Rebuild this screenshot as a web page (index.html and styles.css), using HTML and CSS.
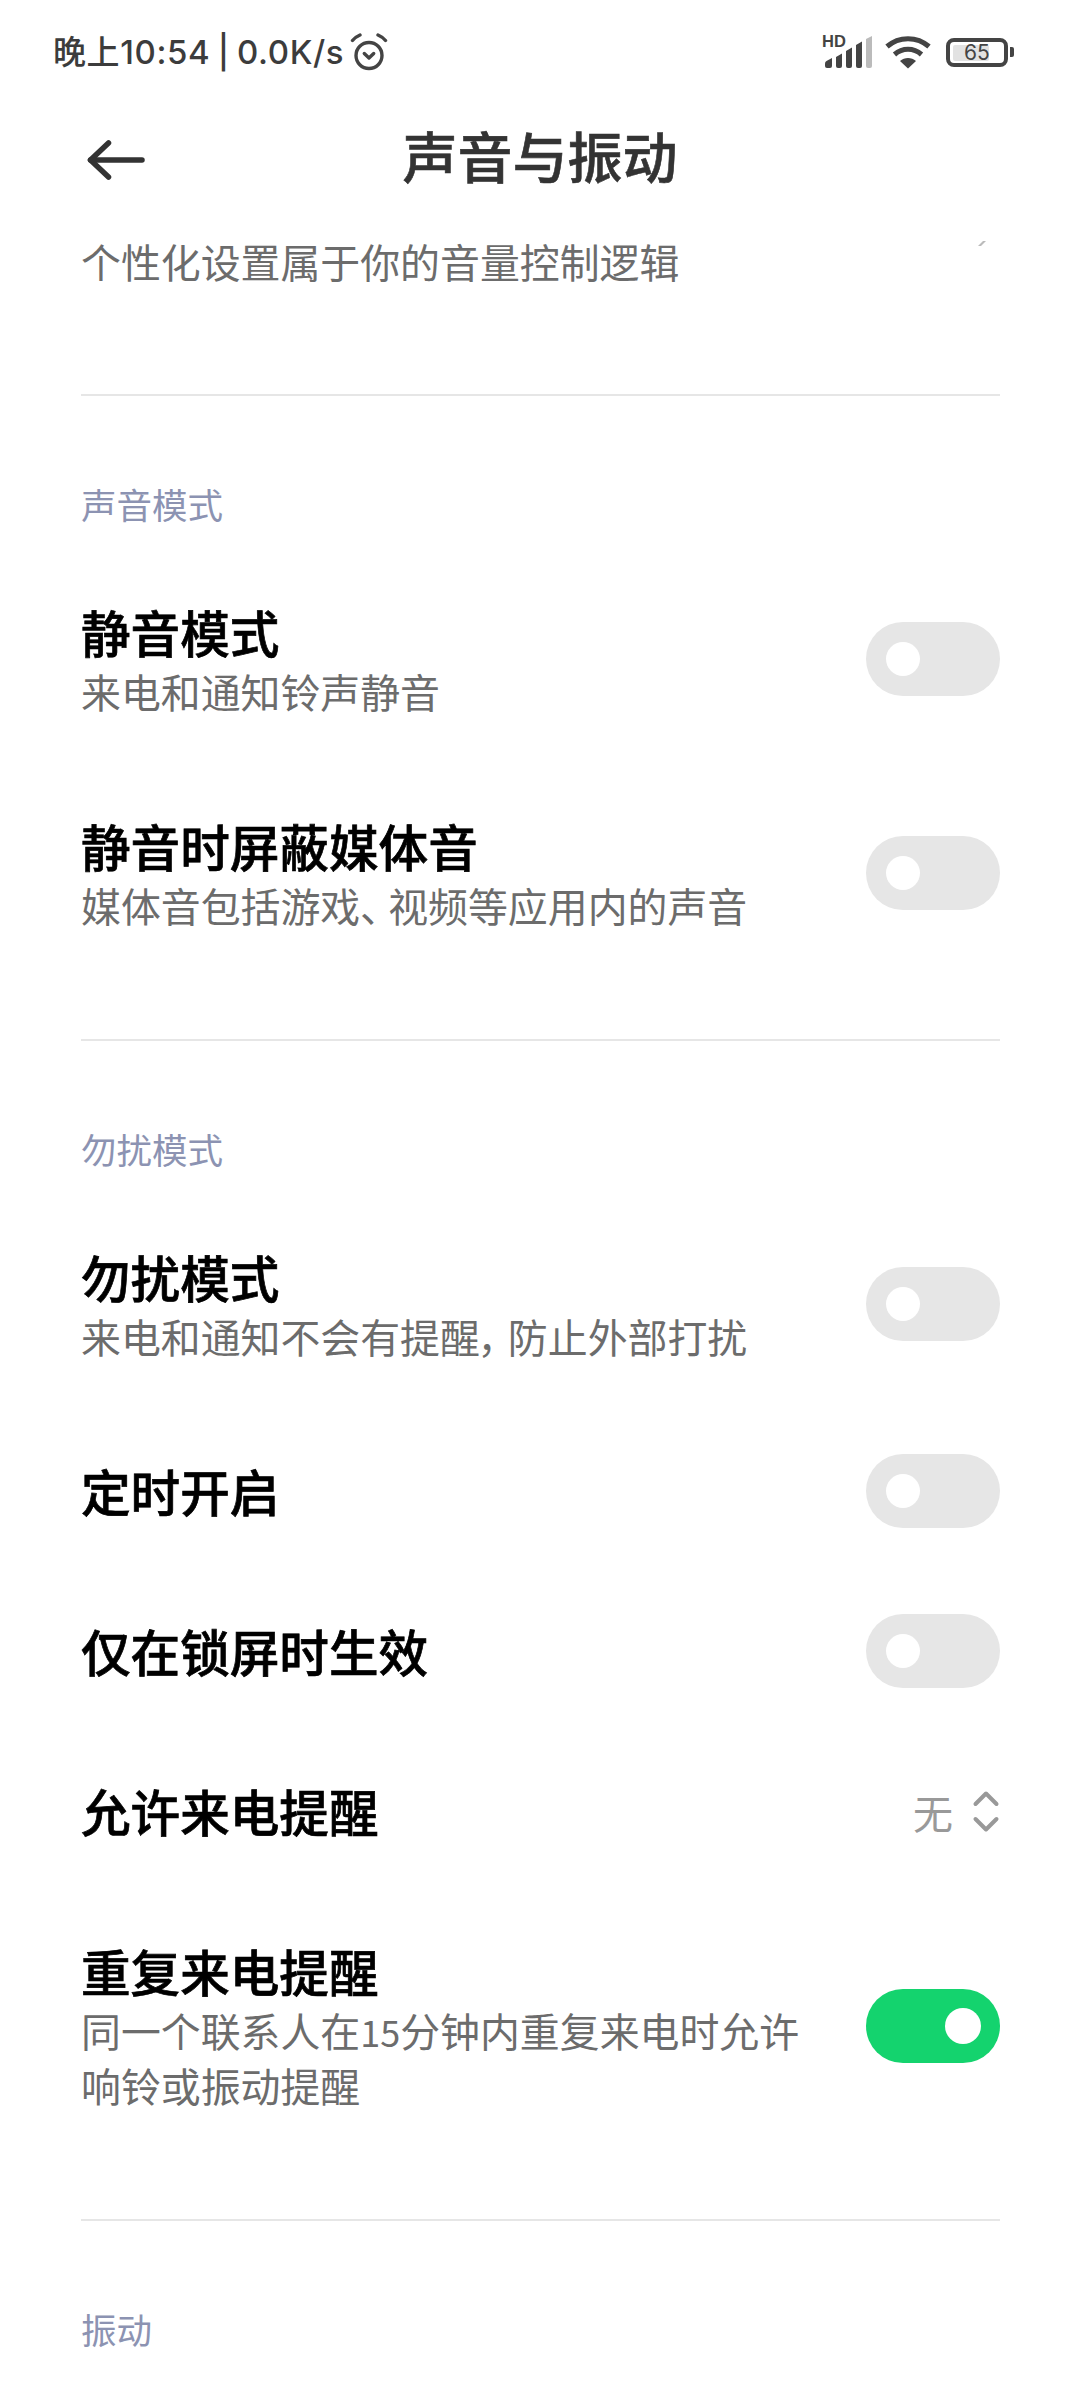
FILE: index.html
```html
<!DOCTYPE html>
<html>
<head>
  <meta charset="utf-8">
  <meta name="viewport" content="width=device-width, initial-scale=1">
  <title>声音与振动</title>
  <link rel="stylesheet" href="styles.css">
</head>
<body>
  <div class="status-bar">
    <div class="status-left">
      <span class="status-text">晚上10:54 | 0.0K/s</span>
      <svg class="alarm" width="40" height="38" viewBox="0 0 40 38" fill="none" stroke="#444" stroke-width="3.4" stroke-linecap="round" stroke-linejoin="round">
        <circle cx="20" cy="22.500" r="13"/>
        <path d="M15.300 20.500l4.700 4.500 4.700-4.500"/>
        <path d="M3.500 7.500C5.500 5 8 3.300 11 2"/>
        <path d="M36.500 7.500C34.500 5 32 3.300 29 2"/>
      </svg>
    </div>
    <div class="status-right">
      <div class="signal">
        <span class="hd">HD</span>
        <svg width="50" height="32" viewBox="0 0 50 32">
          <path d="M3 32a2 2 0 0 1-2-2v-2.500a3 3 0 0 1 1.500-2.500L8 22v8a2 2 0 0 1-2 2z" fill="#444"/>
          <path d="M12 21l6-3.500V30a2 2 0 0 1-2 2h-2a2 2 0 0 1-2-2z" fill="#444"/>
          <path d="M22 15l6-3.500V30a2 2 0 0 1-2 2h-2a2 2 0 0 1-2-2z" fill="#444"/>
          <path d="M32 9l6-3.500V30a2 2 0 0 1-2 2h-2a2 2 0 0 1-2-2z" fill="#444"/>
          <path d="M42 3l6-3V30a2 2 0 0 1-2 2h-2a2 2 0 0 1-2-2z" fill="#bbb"/>
        </svg>
      </div>
      <svg class="wifi" width="46" height="34" viewBox="0 0 46 34" fill="none" stroke="#444" stroke-width="5">
        <path d="M2 11.500C14 1 32 1 44 11.500"/>
        <path d="M9.500 19.500C17.500 12.500 28.500 12.500 36.500 19.500"/>
        <path d="M23 33.500L15 26C19.500 22 26.500 22 31 26z" fill="#444" stroke="none"/>
      </svg>
      <div class="battery">
        <div class="battery-body">
          <div class="battery-fill"></div>
          <span class="battery-num">65</span>
        </div>
        <div class="battery-cap"></div>
      </div>
    </div>
  </div>

  <div class="title-bar">
    <svg class="back" width="62" height="42" viewBox="0 0 62 42" fill="none" stroke="#333" stroke-width="5.500" stroke-linecap="round" stroke-linejoin="round">
      <path d="M23.500 4L5.500 21l18 17"/>
      <path d="M5.500 21H57"/>
    </svg>
    <div class="page-title">声音与振动</div>
  </div>

  <div class="intro">
    <div class="sub">个性化设置属于你的音量控制逻辑</div>
    <svg class="clipped-mark" width="8" height="6" viewBox="0 0 8 6"><path d="M0 6l5-5h3L3 6z" fill="#bbb"/></svg>
  </div>

  <div class="section">
    <div class="section-head">声音模式</div>
    <div class="row">
      <div class="row-text">
        <div class="row-title">静音模式</div>
        <div class="sub">来电和通知铃声静音</div>
      </div>
      <div class="switch"></div>
    </div>
    <div class="row">
      <div class="row-text">
        <div class="row-title">静音时屏蔽媒体音</div>
        <div class="sub">媒体音包括游戏<span class="punct">、</span>视频等应用内的声音</div>
      </div>
      <div class="switch"></div>
    </div>
  </div>

  <div class="section">
    <div class="section-head">勿扰模式</div>
    <div class="row">
      <div class="row-text">
        <div class="row-title">勿扰模式</div>
        <div class="sub">来电和通知不会有提醒<span class="punct">，</span>防止外部打扰</div>
      </div>
      <div class="switch"></div>
    </div>
    <div class="row">
      <div class="row-text">
        <div class="row-title">定时开启</div>
      </div>
      <div class="switch"></div>
    </div>
    <div class="row">
      <div class="row-text">
        <div class="row-title">仅在锁屏时生效</div>
      </div>
      <div class="switch"></div>
    </div>
    <div class="row">
      <div class="row-text">
        <div class="row-title">允许来电提醒</div>
      </div>
      <div class="picker">
        <span class="picker-value">无</span>
        <svg width="28" height="44" viewBox="0 0 28 44" fill="none" stroke="#999" stroke-width="4" stroke-linecap="round" stroke-linejoin="round">
          <path d="M3.500 14L14 3.500 24.500 14"/>
          <path d="M3.500 29L14 39.500 24.500 29"/>
        </svg>
      </div>
    </div>
    <div class="row">
      <div class="row-text">
        <div class="row-title">重复来电提醒</div>
        <div class="sub">同一个联系人在<span class="num">15</span>分钟内重复来电时允许<br>响铃或振动提醒</div>
      </div>
      <div class="switch on"></div>
    </div>
  </div>

  <div class="section">
    <div class="section-head">振动</div>
  </div>
</body>
</html>
```

FILE: styles.css
```css
html, body {
  margin: 0;
  padding: 0;
  height: 2400px;
  overflow: hidden;
  background: #fff;
}
body {
  font-family: "Noto Sans CJK SC", "Noto Sans", sans-serif;
}
.status-bar {
  height: 104px;
  padding: 0 66px 0 53px;
  display: flex;
  justify-content: space-between;
  align-items: center;
}
.status-left, .status-right {
  display: flex;
  align-items: center;
}
.status-text {
  font-family: Inter, "Noto Sans CJK SC", sans-serif;
  font-size: 33px;
  line-height: 40px;
  font-weight: 500;
  letter-spacing: 0.6px;
  word-spacing: -2px;
  color: #3c3c3c;
  white-space: nowrap;
}
.alarm {
  margin-left: 5px;
}
.signal {
  position: relative;
  width: 50px;
  height: 32px;
}
.hd {
  position: absolute;
  left: -2px;
  top: -3px;
  font-family: "Liberation Sans", sans-serif;
  font-size: 16.500px;
  line-height: 16px;
  font-weight: 700;
  color: #444;
}
.wifi {
  margin: 0 15px 0 11px;
}
.battery {
  display: flex;
  align-items: center;
  gap: 2px;
}
.battery-body {
  position: relative;
  width: 62px;
  height: 29px;
  box-sizing: border-box;
  border: 4px solid #444;
  border-radius: 8px;
  display: flex;
  align-items: center;
  justify-content: center;
}
.battery-fill {
  position: absolute;
  left: 3px;
  top: 3px;
  bottom: 2px;
  width: 36px;
  background: #e2e2e2;
  border-radius: 2px;
}
.battery-num {
  position: relative;
  font-size: 21px;
  line-height: 21px;
  color: #444;
  font-family: Inter, sans-serif;
}
.battery-cap {
  width: 4px;
  height: 10px;
  background: #444;
  border-radius: 0 2px 2px 0;
}
.title-bar {
  position: relative;
  height: 106px;
  display: flex;
  align-items: center;
  justify-content: center;
}
.back {
  position: absolute;
  left: 85px;
  top: 35px;
}
.page-title {
  font-size: 55px;
  line-height: 70px;
  font-weight: 500;
  -webkit-text-stroke: 0.6px #333;
  color: #333;
  transform: translateY(-3px);
}
.intro {
  margin: 0 80px 0 81px;
  padding: 24px 0 106px;
  display: flex;
  justify-content: space-between;
  align-items: flex-start;
}
.clipped-mark {
  margin-top: 6px;
  margin-right: 14px;
}
.sub {
  font-size: 39.900px;
  line-height: 54px;
  color: #6c6c6c;
}
.punct {
  font-feature-settings: "palt";
  letter-spacing: 8px;
}
.num {
  font-size: 36px;
}
.section {
  margin: 0 80px 0 81px;
  border-top: 2px solid #e6e6e6;
  padding-bottom: 60px;
}
.section-head {
  padding-top: 84px;
  padding-bottom: 23px;
  font-size: 35.500px;
  line-height: 48px;
  color: #8c93b2;
}
.row {
  display: flex;
  justify-content: space-between;
  align-items: center;
  padding: 49px 0;
  min-height: 62px;
}
.row-text {
  width: 730px;
}
.row-title {
  font-size: 49.600px;
  line-height: 62px;
  font-weight: 500;
  -webkit-text-stroke: 0.7px #000;
  color: #000;
}
.row-title + .sub {
  margin-top: 2px;
  margin-bottom: -2px;
}
.switch {
  position: relative;
  flex: none;
  width: 134px;
  height: 74px;
  margin: -5px 0 -7px;
  border-radius: 37px;
  background: #e6e6e6;
}
.switch::after {
  content: "";
  position: absolute;
  left: 20px;
  top: 20px;
  width: 34px;
  height: 34px;
  border-radius: 50%;
  background: #fff;
}
.switch.on {
  background: #14d36e;
}
.switch.on::after {
  left: auto;
  right: 19px;
  top: 19px;
  width: 36px;
  height: 36px;
}
.picker {
  display: flex;
  align-items: center;
  gap: 19px;
  margin: -4px 0 -8px;
}
.picker-value {
  font-size: 40px;
  line-height: 54px;
  color: #999;
}
```
